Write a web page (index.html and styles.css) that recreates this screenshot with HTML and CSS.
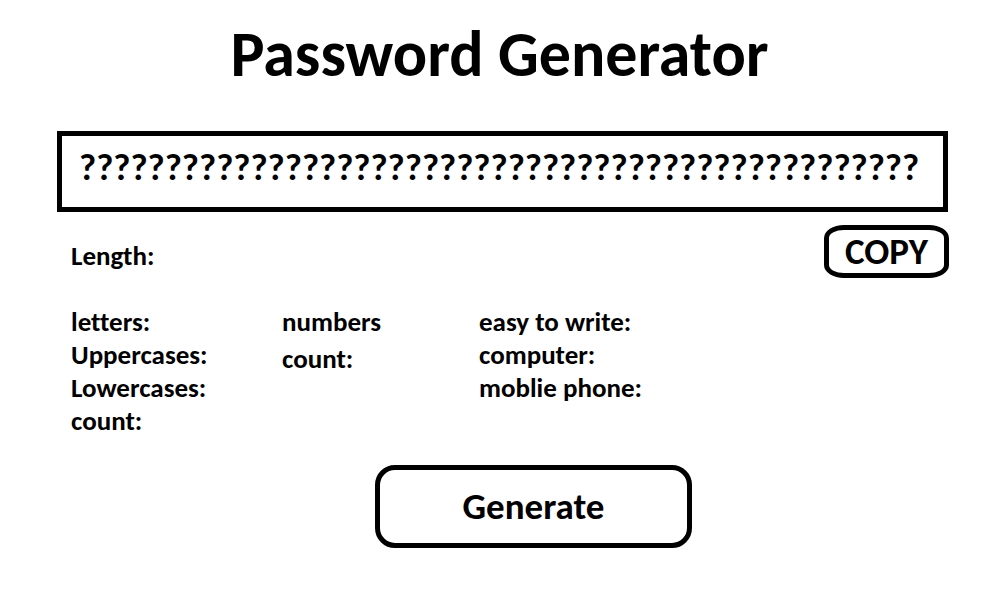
FILE: index.html
```html
<!DOCTYPE html>
<html lang="en">
<head>
<meta charset="utf-8">
<title>Password Generator</title>
<link rel="stylesheet" href="styles.css">
</head>
<body>
<main class="page">
  <h1 class="title">Password Generator</h1>
  <input class="password" type="text" aria-label="Password" value="?????????????????????????????????????????????????" readonly>
  <div class="toolbar">
    <p class="length">Length:</p>
    <button class="copy" type="button">COPY</button>
  </div>
  <div class="options">
    <div class="group">
      <p>letters:</p>
      <p>Uppercases:</p>
      <p>Lowercases:</p>
      <p>count:</p>
    </div>
    <div class="group numbers">
      <p>numbers</p>
      <p>count:</p>
    </div>
    <div class="group">
      <p>easy to write:</p>
      <p>computer:</p>
      <p>moblie phone:</p>
    </div>
  </div>
  <button class="generate" type="button">Generate</button>
</main>
</body>
</html>
```
FILE: styles.css
```css
* {
  box-sizing: border-box;
}

body {
  margin: 0;
  background: #fff;
  color: #000;
  font-family: Calibri, Carlito, Lato, "Open Sans", sans-serif;
  font-weight: 700;
  font-variant-ligatures: none;
}

p,
h1 {
  margin: 0;
}

button,
input {
  border: 5px solid #000;
  background: #fff;
  color: inherit;
  font: inherit;
}

.page {
  display: flex;
  flex-direction: column;
  padding: 16px 52px 52px 57px;
}

.title {
  align-self: center;
  padding-right: 6px;
  font-size: 64px;
  line-height: 76px;
}

.password {
  width: 100%;
  height: 81px;
  margin-top: 39px;
  padding: 0 17px 8px;
  font-size: 37px;
}

.toolbar {
  display: flex;
  justify-content: space-between;
  margin: 13px -1px 0 0;
  padding-left: 14px;
}

.length {
  padding-top: 15px;
  font-size: 27px;
  line-height: 32px;
}

.copy {
  width: 125px;
  height: 53px;
  padding: 0;
  border-radius: 20px / 13px;
  font-size: 37px;
  line-height: 40px;
}

.options {
  display: grid;
  grid-template-columns: 211px 197px 1fr;
  margin-top: 27px;
  padding-left: 14px;
  font-size: 27px;
  line-height: 33px;
}

.numbers {
  display: flex;
  flex-direction: column;
  gap: 4px;
}

.generate {
  align-self: center;
  width: 317px;
  height: 83px;
  margin: 28px 0 0 62px;
  border-radius: 20px;
  font-size: 37px;
}
```
